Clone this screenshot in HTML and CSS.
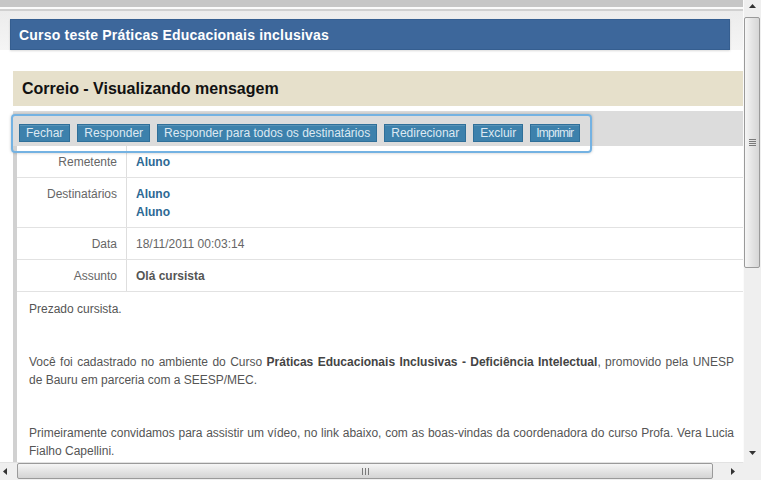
FILE: index.html
```html
<!DOCTYPE html>
<html lang="pt-BR">
<head>
<meta charset="utf-8">
<title>Correio - Visualizando mensagem</title>
<link rel="stylesheet" href="styles.css">
</head>
<body>
<div class="window">
  <div class="viewport">
    <div class="frame-top"></div>
    <div class="course-area">
      <div class="course-bar">Curso teste Práticas Educacionais inclusivas</div>
    </div>
    <div class="panel">
      <div class="panel-title">Correio - Visualizando mensagem</div>
      <div class="toolbar-band">
        <div class="toolbar">
          <button class="btn">Fechar</button>
          <button class="btn">Responder</button>
          <button class="btn">Responder para todos os destinatários</button>
          <button class="btn">Redirecionar</button>
          <button class="btn">Excluir</button>
          <button class="btn btn-tight">Imprimir</button>
        </div>
      </div>
      <div class="msg">
        <div class="row">
          <div class="label">Remetente</div>
          <div class="value"><span class="user">Aluno</span></div>
        </div>
        <div class="row">
          <div class="label">Destinatários</div>
          <div class="value"><span class="user">Aluno</span><br><span class="user">Aluno</span></div>
        </div>
        <div class="row">
          <div class="label">Data</div>
          <div class="value">18/11/2011 00:03:14</div>
        </div>
        <div class="row">
          <div class="label">Assunto</div>
          <div class="value"><strong class="subject">Olá cursista</strong></div>
        </div>
        <div class="body">
          <p>Prezado cursista.</p>
          <p>Você foi cadastrado no ambiente do Curso <strong>Práticas Educacionais Inclusivas - Deficiência Intelectual</strong>, promovido pela UNESP de Bauru em parceria com a SEESP/MEC.</p>
          <p>Primeiramente convidamos para assistir um vídeo, no link abaixo, com as boas-vindas da coordenadora do curso Profa. Vera Lucia Fialho Capellini.</p>
        </div>
      </div>
    </div>
  </div>

  <div class="vscroll">
    <div class="sb-btn sb-up"><svg width="7" height="4" viewBox="0 0 7 4"><polygon points="0,4 3.5,0 7,4" fill="#333"/></svg></div>
    <div class="vthumb"><svg width="7" height="8" viewBox="0 0 7 8"><g fill="#7a7a7a"><rect x="0" y="0" width="7" height="1"/><rect x="0" y="2" width="7" height="1"/><rect x="0" y="4" width="7" height="1"/><rect x="0" y="6" width="7" height="1"/></g></svg></div>
    <div class="sb-track"></div>
    <div class="sb-btn sb-down"><svg width="7" height="4" viewBox="0 0 7 4"><polygon points="0,0 7,0 3.5,4" fill="#333"/></svg></div>
  </div>

  <div class="hscroll">
    <div class="sb-btn sb-left"><svg width="4" height="7" viewBox="0 0 4 7"><polygon points="4,0 4,7 0,3.5" fill="#333"/></svg></div>
    <div class="hthumb"><svg width="7" height="7" viewBox="0 0 7 7"><g fill="#7a7a7a"><rect x="0" y="0" width="1" height="7"/><rect x="3" y="0" width="1" height="7"/><rect x="6" y="0" width="1" height="7"/></g></svg></div>
    <div class="sb-track"></div>
    <div class="sb-btn sb-right"><svg width="4" height="7" viewBox="0 0 4 7"><polygon points="0,0 4,3.5 0,7" fill="#333"/></svg></div>
  </div>

  <div class="corner"></div>
</div>
</body>
</html>
```

FILE: styles.css
```css
* { box-sizing: border-box; }

html, body {
  margin: 0;
  padding: 0;
  height: 480px;
  overflow: hidden;
  background: #ffffff;
  font-family: "Liberation Sans", Arial, sans-serif;
  font-size: 12px;
  color: #555555;
}

.window {
  display: grid;
  grid-template-columns: 743px 18px;
  grid-template-rows: 462px 18px;
  width: 761px;
  height: 480px;
}

.viewport {
  overflow: hidden;
  background: #ffffff;
}

.frame-top {
  height: 11px;
  background: linear-gradient(to bottom, #c6c6c6 0, #c6c6c6 7px, #fafafa 7px, #fafafa 9px, #d0d0d0 9px, #d0d0d0 11px);
}

.course-area {
  padding: 8px 13px 21px 10px;
  background: linear-gradient(to bottom, #ececec 0, #f5f5f5 39px, #ffffff 39px);
}

.course-bar {
  height: 31px;
  line-height: 30px;
  padding-left: 8px;
  background: #3d679b;
  border: 1px solid #355e90;
  color: #ffffff;
  font-size: 14px;
  font-weight: bold;
  letter-spacing: 0.2px;
  box-shadow: 0 1px 2px rgba(0, 0, 0, 0.15);
}

.panel {
  margin-left: 13px;
}

.panel-title {
  height: 35px;
  line-height: 35px;
  padding-left: 9px;
  background: #e6e0cb;
  color: #111111;
  font-size: 16px;
  font-weight: bold;
  margin-bottom: 5px;
}

.toolbar-band {
  height: 35px;
  background: #dcdcdc;
}

.toolbar {
  position: relative;
  z-index: 1;
  display: inline-flex;
  gap: 7px;
  margin: 3px 0 0 -2px;
  padding: 8px 10px 9px 6px;
  border: 2px solid #74b2e2;
  border-radius: 4px;
  box-shadow: 0 0 3px rgba(0, 0, 0, 0.25);
}

.btn {
  appearance: none;
  margin: 0;
  height: 18px;
  padding: 0 6px;
  border: 1px solid #2f6f99;
  border-radius: 0;
  background: #3d81ac;
  color: #dde9f2;
  font-family: "Liberation Sans", Arial, sans-serif;
  font-size: 12px;
  line-height: 16px;
  white-space: nowrap;
  box-shadow: inset 0 1px 0 rgba(255, 255, 255, 0.15);
}

.btn-tight {
  letter-spacing: -0.8px;
  padding: 0 6px 0 5px;
}

.msg {
  border-left: 4px solid #d1d1d1;
  min-height: 400px;
  background: #ffffff;
}

.row {
  display: grid;
  grid-template-columns: 110px 1fr;
  border-bottom: 1px solid #e2e2e2;
}

.label {
  border-right: 1px solid #dedede;
  text-align: right;
  padding: 7px 9px 6px 0;
  line-height: 18px;
  color: #666666;
}

.value {
  padding: 7px 9px 6px 9px;
  line-height: 18px;
  color: #666666;
}

.user {
  color: #2c6894;
  font-weight: bold;
}

.subject {
  color: #555555;
}

.body {
  padding: 8px 9px 0 12px;
  line-height: 18px;
  text-align: justify;
}

.body p {
  margin: 0 0 35px 0;
}

.body strong {
  color: #444444;
}

/* scrollbars */
.vscroll {
  display: flex;
  flex-direction: column;
  background: #efefef;
  border-left: 1px solid #fbfbfb;
}

.hscroll {
  display: flex;
  flex-direction: row;
  background: #efefef;
  border-top: 1px solid #e2e2e2;
}

.sb-btn {
  display: flex;
  align-items: center;
  justify-content: center;
  flex: none;
}

.sb-up {
  height: 17px;
  align-items: flex-start;
  padding-top: 4px;
}

.sb-down {
  height: 19px;
}

.sb-left {
  width: 17px;
  justify-content: flex-start;
  padding-left: 3px;
}

.sb-right {
  width: 20px;
}

.sb-track {
  flex: 1;
}

.vthumb {
  flex: none;
  height: 251px;
  margin: 0 1px 0 0;
  border: 1px solid #9a9a9a;
  border-radius: 2px;
  background: linear-gradient(to right, #f6f6f6, #e4e4e4 50%, #d6d6d6);
  display: flex;
  align-items: center;
  justify-content: center;
}

.hthumb {
  flex: none;
  width: 696px;
  margin: 0 0 1px 0;
  border: 1px solid #9a9a9a;
  border-radius: 2px;
  background: linear-gradient(to bottom, #f6f6f6, #e4e4e4 50%, #d4d4d4);
  display: flex;
  align-items: center;
  justify-content: center;
}

.corner {
  background: #efefef;
}
```
